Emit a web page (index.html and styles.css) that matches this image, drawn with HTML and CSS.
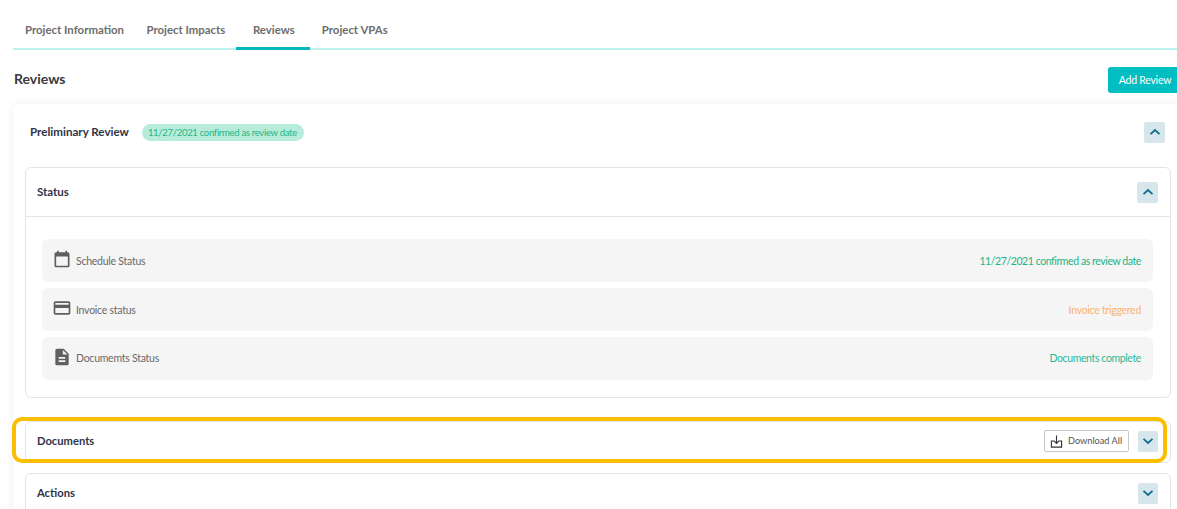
FILE: index.html
```html
<!DOCTYPE html>
<html lang="en">
<head>
<meta charset="utf-8">
<title>Reviews</title>
<link rel="stylesheet" href="styles.css">
</head>
<body>
<main class="page">
  <nav class="tabs">
    <a class="tab">Project Information</a>
    <a class="tab">Project Impacts</a>
    <a class="tab active">Reviews</a>
    <a class="tab">Project VPAs</a>
  </nav>
  <div class="title-row">
    <h1>Reviews</h1>
    <button class="add">Add Review</button>
  </div>
  <section class="outer">
    <header class="outer-head">
      <h2>Preliminary Review</h2>
      <span class="pill">11/27/2021 confirmed as review date</span>
      <button class="toggle push"><svg viewBox="0 0 12 8" class="chev"><path d="M1.5 6.2 6 2l4.5 4.2"/></svg></button>
    </header>
    <div class="stack">
      <section class="card status">
        <header class="card-head bordered">
          <h3>Status</h3>
          <button class="toggle"><svg viewBox="0 0 12 8" class="chev"><path d="M1.5 6.2 6 2l4.5 4.2"/></svg></button>
        </header>
        <div class="rows">
          <div class="row">
            <svg class="ic" viewBox="0 0 24 24"><path d="M19 4h-1V2h-2v2H8V2H6v2H5c-1.1 0-2 .9-2 2v14c0 1.100.9 2 2 2h14c1.100 0 2-.9 2-2V6c0-1.100-.9-2-2-2zm0 16H5V9h14v11z"/></svg>
            <span class="label">Schedule Status</span>
            <span class="val green">11/27/2021 confirmed as review date</span>
          </div>
          <div class="row">
            <svg class="ic" viewBox="0 0 24 24"><path d="M20 4H4c-1.100 0-2 .9-2 2v12c0 1.100.9 2 2 2h16c1.100 0 2-.9 2-2V6c0-1.100-.9-2-2-2zm0 14H4v-6h16v6zm0-10H4V6h16v2z"/></svg>
            <span class="label">Invoice status</span>
            <span class="val orange">Invoice triggered</span>
          </div>
          <div class="row last">
            <svg class="ic" viewBox="0 0 24 24"><path d="M14 2H6c-1.100 0-2 .9-2 2v16c0 1.100.9 2 2 2h12c1.100 0 2-.9 2-2V8l-6-6zm2 16H8v-2h8v2zm0-4H8v-2h8v2zm-3-5V3.500L18.500 9H13z"/></svg>
            <span class="label">Documemts Status</span>
            <span class="val teal">Documents complete</span>
          </div>
        </div>
      </section>
      <section class="card docs">
        <header class="card-head">
          <h3>Documents</h3>
          <button class="download">
            <svg viewBox="0 0 14 14" class="dl"><path d="M7 .5v8.500M4 6l3 3 3-3M4.500 6.500H1.500v6.500h11V6.500h-3"/></svg>
            Download All
          </button>
          <button class="toggle small"><svg viewBox="0 0 12 8" class="chev"><path d="M1.500 1.800 6 6l4.500-4.200"/></svg></button>
        </header>
        <div class="highlight"></div>
      </section>
      <section class="card actions">
        <header class="card-head">
          <h3>Actions</h3>
          <button class="toggle small"><svg viewBox="0 0 12 8" class="chev"><path d="M1.500 1.800 6 6l4.500-4.200"/></svg></button>
        </header>
      </section>
    </div>
  </section>
</main>
</body>
</html>
```
FILE: styles.css
```css
* { box-sizing: border-box; }
html, body { margin: 0; height: 509px; overflow: hidden; background: #fff; }
body { font-family: Lato, "Open Sans", sans-serif; color: #333; }
.page { padding-left: 13px; width: 1177px; }
.tabs { display: flex; height: 50px; padding-top: 20px; border-bottom: 2px solid #bff0f0; }
.tab { display: block; height: 30px; padding: 2px 11px 0 12px; font-size: 11.400px; line-height: 16px; font-weight: 700; color: #6d6d6d; }
.tab:nth-child(2) { padding: 2px 11px 0 11.500px; }
.tab.active { width: 74px; padding: 2px 0 0 1px; text-align: center; margin-bottom: -2px; height: 30px; border-bottom: 3px solid #00bcbf; }
.tab:nth-child(4) { padding-left: 11.500px; }
.title-row { display: flex; justify-content: space-between; align-items: flex-start; height: 54px; padding-top: 17px; }
h1 { margin: 3px 0 0 1px; font-size: 14px; line-height: 18px; font-weight: 700; color: #3b3b3b; }
.add { width: 69px; height: 26px; margin-top: 0; padding: 0 0 0 5px; border: 0; border-radius: 3px 0 0 3px; background: #00bec1; color: #fff; font: 400 10.500px/26px Lato, sans-serif; letter-spacing: -.25px; }
.outer { background: #fff; border-radius: 6px 0 0 6px; box-shadow: 0 0 10px rgba(0,0,0,.07); height: 420px; padding: 0 6px 0 12px; }
.outer-head { display: flex; align-items: center; height: 63px; padding: 0 6px 7px 5px; }
h2 { margin: 0; font-size: 11.600px; font-weight: 700; color: #2f3447; line-height: 16px; }
.pill { margin-left: 13px; height: 17px; padding: 0 7px 0 6px; border-radius: 9px; background: #b8ecda; color: #1fb684; font-size: 9.500px; line-height: 17px; letter-spacing: -.3px; }
.toggle { display: flex; align-items: center; justify-content: center; width: 21px; height: 21px; padding: 0; border: 0; border-radius: 2px; background: #d6e6ec; }
.toggle.small { width: 20px; height: 21px; }
.push { margin-left: auto; }
.chev { width: 12px; height: 8px; fill: none; stroke: #0b6f92; stroke-width: 1.800; }
.stack { display: flex; flex-direction: column; }
.card { position: relative; border: 1px solid #e4e4e4; border-radius: 6px; background: #fff; }
.card-head { display: flex; align-items: center; justify-content: space-between; padding: 0 12px 0 11px; height: 49px; }
.card-head.bordered { border-bottom: 1px solid #e4e4e4; }
h3 { margin: 0; font-size: 11.500px; font-weight: 700; color: #2f3447; line-height: 16px; }
.docs h3, .actions h3 { font-size: 11.200px; }
.status { height: 231px; }
.rows { display: flex; flex-direction: column; gap: 6px; padding: 22px 17px 0 16px; }
.row { display: flex; align-items: center; height: 43px; padding: 0 12px; border-radius: 6px; background: #f5f5f5; font-size: 10.500px; }
.row.last { padding-bottom: 1px; }
.ic { width: 20px; height: 20px; margin: -3px 0 0 -2px; fill: #5f5f5f; }
.label { margin-left: 4px; color: #6a6a6a; letter-spacing: -.25px; }
.val { margin-left: auto; }
.green { color: #1cb487; letter-spacing: -.42px; }
.orange { color: #fbb26e; letter-spacing: -.27px; }
.teal { color: #2eb796; letter-spacing: -.38px; }
.docs { height: 42px; margin-top: 23px; }
.docs .card-head { height: 38px; padding-right: 12px; }
.docs h3 { margin-right: auto; }
.download { display: flex; align-items: center; gap: 5px; width: 85px; height: 22px; margin-right: 9px; padding: 0 0 0 5px; border: 1px solid #c8c8c8; border-radius: 2px; background: #fff; color: #555; font: 400 9.200px/20px Lato, sans-serif; }
.dl { width: 13px; height: 13px; fill: none; stroke: #333; stroke-width: 1.200; }
.highlight { position: absolute; left: -14px; top: -5px; width: 1155px; height: 46px; border: 4px solid #fdbe00; border-radius: 10px; pointer-events: none; }
.actions { height: 60px; margin-top: 10px; }
.actions .card-head { height: 38px; }
```
